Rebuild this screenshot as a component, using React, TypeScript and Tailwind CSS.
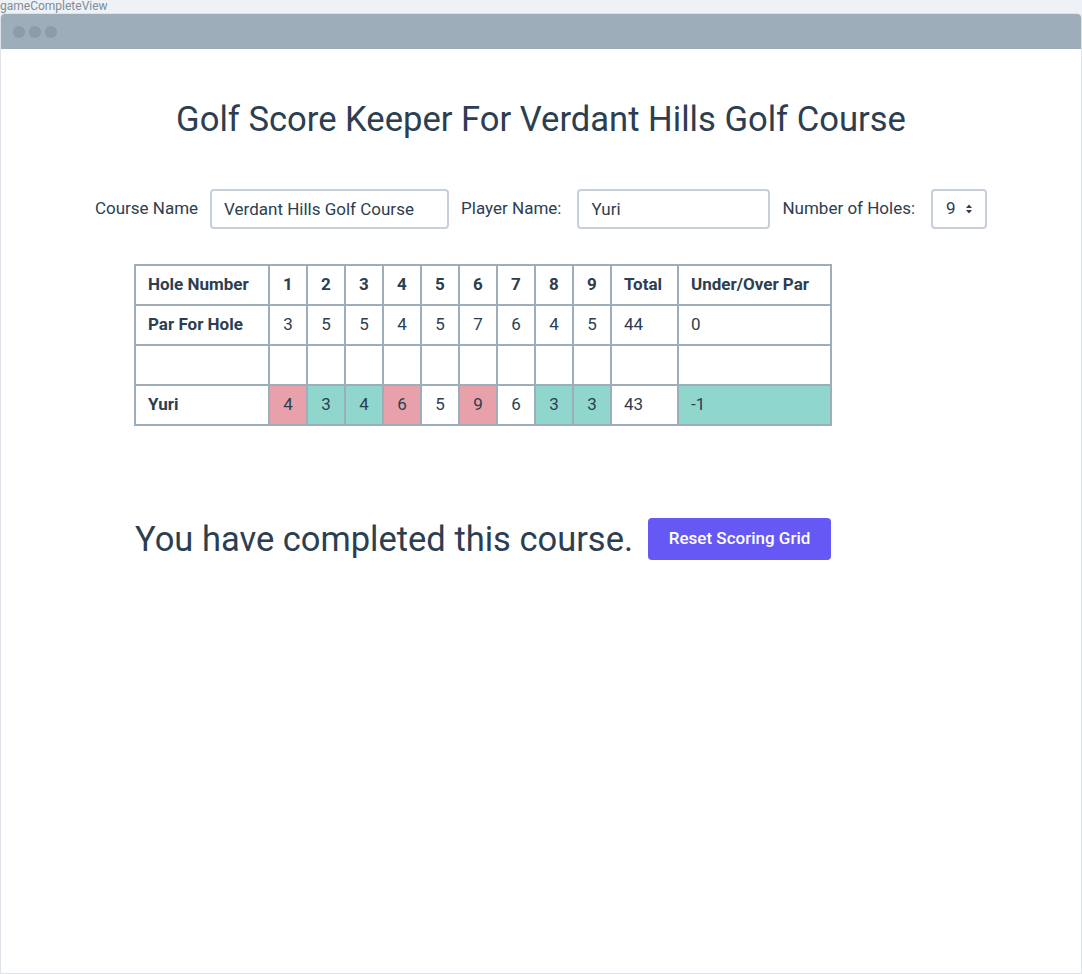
import React from 'react';

// Par and score data for the finished round.
const holes = [1, 2, 3, 4, 5, 6, 7, 8, 9];
const par = [3, 5, 5, 4, 5, 7, 6, 4, 5];
const scores = [4, 3, 4, 6, 5, 9, 6, 3, 3];

// Wide cells are left aligned with padding, hole cells are centred.
const cellWide = "border-2 border-[#9eadba] h-10 px-3 text-left";
const cellHole = "border-2 border-[#9eadba] h-10 w-[38px] text-center";

// Colour a score cell by how it compares with par.
const scoreColor = (score: number, holePar: number) => {
    if (score > holePar) return "bg-[#e8a1ab]";
    if (score < holePar) return "bg-[#8fd7cd]";
    return "bg-white";
};

const App: React.FC = () => {
    const total = scores.reduce((a, b) => a + b, 0);
    const parTotal = par.reduce((a, b) => a + b, 0);
    const diff = total - parTotal;

    return (
        <div className="min-h-screen bg-[#eef2f6] font-['Roboto',sans-serif] text-[#2c3e50]">
            <div className="h-[13px] text-[12px] leading-[12px] text-[#7f8c9a]">gameCompleteView</div>
            <div className="bg-white border border-[#dde3e8] rounded-t-[5px] h-[961px]">
                <div className="h-[35px] bg-[#9eadba] rounded-t-[4px] flex items-center gap-[4px] pl-[12px]">
                    <span className="w-[12px] h-[12px] rounded-full bg-[#8d9cab]" />
                    <span className="w-[12px] h-[12px] rounded-full bg-[#8d9cab]" />
                    <span className="w-[12px] h-[12px] rounded-full bg-[#8d9cab]" />
                </div>

                <h1 className="text-center text-[34.6px] leading-[40px] mt-[50px]">Golf Score Keeper For Verdant Hills Golf Course</h1>

                {/* Course / player / holes form */}
                <div className="flex items-center justify-center gap-[12px] mt-[50px] text-[17px]">
                    <label>Course Name</label>
                    <input readOnly value="Verdant Hills Golf Course" className="w-[239px] h-[40px] border-2 border-[#c7d0d9] rounded-[4px] px-[12px] outline-none" />
                    <label className="mr-[4px]">Player Name:</label>
                    <input readOnly value="Yuri" className="w-[193px] h-[40px] border-2 border-[#c7d0d9] rounded-[4px] px-[12px] outline-none" />
                    <label className="mr-[4px]">Number of Holes:</label>
                    <div className="w-[56px] h-[40px] border-2 border-[#c7d0d9] rounded-[4px] flex items-center pl-[13px] gap-[9px]">
                        <span>9</span>
                        <svg width="8" height="12" viewBox="0 0 8 12" className="text-[#2c3e50]">
                            <path d="M1 5 L4 1.5 L7 5 Z" fill="currentColor" />
                            <path d="M1 7 L4 10.5 L7 7 Z" fill="currentColor" />
                        </svg>
                    </div>
                </div>

                {/* Score grid */}
                <div className="ml-[133px] mt-[35px]">
                    <table className="border-collapse text-[17px]">
                        <thead>
                            <tr className="font-bold">
                                <th className={`${cellWide} w-[134px]`}>Hole Number</th>
                                {holes.map(h => <th key={h} className={cellHole}>{h}</th>)}
                                <th className={`${cellWide} w-[67px]`}>Total</th>
                                <th className={`${cellWide} w-[153px]`}>Under/Over Par</th>
                            </tr>
                        </thead>
                        <tbody>
                            <tr>
                                <td className={`${cellWide} font-bold`}>Par For Hole</td>
                                {par.map((p, i) => <td key={i} className={cellHole}>{p}</td>)}
                                <td className={cellWide}>{parTotal}</td>
                                <td className={cellWide}>0</td>
                            </tr>
                            <tr>
                                <td className={cellWide}></td>
                                {holes.map(h => <td key={h} className={cellHole}></td>)}
                                <td className={cellWide}></td>
                                <td className={cellWide}></td>
                            </tr>
                            <tr>
                                <td className={`${cellWide} font-bold`}>Yuri</td>
                                {scores.map((s, i) => <td key={i} className={`${cellHole} ${scoreColor(s, par[i])}`}>{s}</td>)}
                                <td className={cellWide}>{total}</td>
                                <td className={`${cellWide} ${diff < 0 ? 'bg-[#8fd7cd]' : diff > 0 ? 'bg-[#e8a1ab]' : ''}`}>{diff}</td>
                            </tr>
                        </tbody>
                    </table>
                </div>

                {/* Completion message */}
                <div className="flex items-center gap-[15px] ml-[134px] mt-[92px]">
                    <p className="text-[34.5px] leading-[40px]">You have completed this course.</p>
                    <button className="w-[183px] h-[42px] bg-[#6558f5] text-white rounded-[4px] text-[17px] font-medium">Reset Scoring Grid</button>
                </div>
            </div>
        </div>
    );
};

export default App;
